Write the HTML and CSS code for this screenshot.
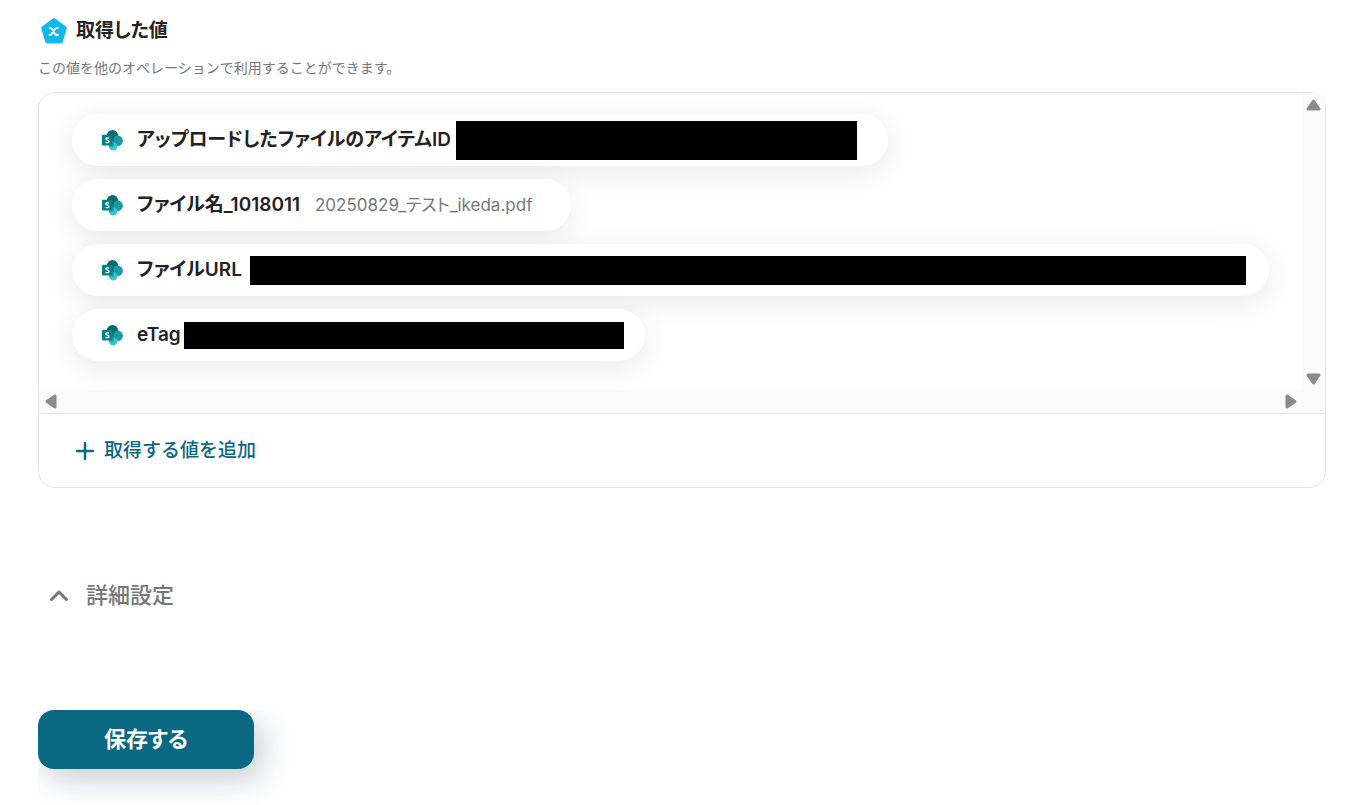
FILE: index.html
```
<!DOCTYPE html>
<html lang="ja">
<head>
    <meta charset="UTF-8">
    <meta name="viewport" content="width=device-width, initial-scale=1.0">
    <title>取得した値</title>
    <link rel="stylesheet" href="styles.css">
</head>
<body>
    <!-- Shared icons -->
    <svg class="sprite" aria-hidden="true">
        <symbol id="sharepoint" viewBox="0 0 22 22">
            <circle cx="11.500" cy="6.800" r="5.800" fill="#036c70"/>
            <circle cx="16.700" cy="11.800" r="5.200" fill="#1a9ba1"/>
            <circle cx="12.200" cy="17.400" r="4.200" fill="#37c6d0"/>
            <path d="M6 5.500h5.800a1 1 0 0 1 1 1v11.200H8z" fill="#000" opacity="0.200"/>
            <rect x="1" y="5.800" width="10.600" height="10.800" rx="1" fill="#038387"/>
            <path d="M8 9.200C7 8.700 4.800 8.600 4.800 9.900c0 1.500 3.200 1.100 3.200 2.600 0 1.400-2.400 1.300-3.400.8" fill="none" stroke="#fff" stroke-width="1.300"/>
        </symbol>
    </svg>
    <main class="page">
        <header class="section-header">
            <svg class="section-icon" viewBox="0 0 26 26" aria-hidden="true">
                <path d="M13 2.200 23.800 10 19.700 23.600H6.300L2.200 10z" fill="#11b9ea" stroke="#11b9ea" stroke-width="4" stroke-linejoin="round"/>
                <path d="M8.900 10.200c1.500-.3 2.300.3 3.200 2.200l1.200 2.600c.8 1.700 1.800 2.400 3.700 1.900M16.700 10c-1.300-.4-2.100.2-3.100 1.600l-2.500 3.800c-.8 1.200-1.500 1.800-2.600 1.500" fill="none" stroke="#fff" stroke-width="1.900" stroke-linecap="round"/>
            </svg>
            <h2 class="section-title">取得した値</h2>
        </header>
        <p class="section-note">この値を他のオペレーションで利用することができます。</p>

        <section class="card">
            <div class="scroll-area">
                <ul class="value-list">
                    <li class="chip chip-id">
                        <svg class="chip-icon" aria-hidden="true"><use href="#sharepoint"/></svg>
                        <span class="chip-label">アップロードしたファイルのアイテムID</span>
                        <span class="mask mask-id"></span>
                    </li>
                    <li class="chip chip-name">
                        <svg class="chip-icon" aria-hidden="true"><use href="#sharepoint"/></svg>
                        <span class="chip-label">ファイル名_1018011</span>
                        <span class="chip-value">20250829_テスト_ikeda.pdf</span>
                    </li>
                    <li class="chip chip-url">
                        <svg class="chip-icon" aria-hidden="true"><use href="#sharepoint"/></svg>
                        <span class="chip-label">ファイルURL</span>
                        <span class="mask mask-url"></span>
                    </li>
                    <li class="chip chip-etag">
                        <svg class="chip-icon" aria-hidden="true"><use href="#sharepoint"/></svg>
                        <span class="chip-label">eTag</span>
                        <span class="mask mask-etag"></span>
                    </li>
                </ul>
                <div class="bar bar-y" aria-hidden="true">
                    <svg width="15" height="12" viewBox="0 0 15 12"><path d="M7.500 2 13 10H2z"/></svg>
                    <svg width="15" height="12" viewBox="0 0 15 12"><path d="M7.500 10 13 2H2z"/></svg>
                </div>
                <div class="bar bar-x" aria-hidden="true">
                    <svg width="12" height="15" viewBox="0 0 12 15"><path d="M2 7.500 10 2v11z"/></svg>
                    <svg width="12" height="15" viewBox="0 0 12 15"><path d="M10 7.500 2 2v11z"/></svg>
                </div>
            </div>
            <div class="card-footer">
                <button type="button" class="add-btn">
                    <svg width="18" height="18" viewBox="0 0 18 18" aria-hidden="true"><path d="M9 1v16M1 9h16"/></svg>
                    取得する値を追加
                </button>
            </div>
        </section>

        <button type="button" class="details-btn">
            <svg width="20" height="14" viewBox="0 0 20 14" aria-hidden="true"><path d="M2.500 11.500 10 4l7.500 7.500"/></svg>
            詳細設定
        </button>

        <div class="actions">
            <button type="submit" class="save-btn">保存する</button>
        </div>
    </main>
</body>
</html>
```
FILE: styles.css
```
* {
    box-sizing: border-box;
}
body {
    margin: 0;
    background: #fff;
    color: #222;
    font-family: Inter, "Noto Sans CJK JP", sans-serif;
}
button {
    border: none;
    background: none;
    padding: 0;
    font-family: inherit;
    cursor: pointer;
}
.sprite {
    position: absolute;
    width: 0;
    height: 0;
}
.page {
    padding: 17px 43px 0 38px;
}
.section-header {
    display: flex;
    align-items: center;
    gap: 9px;
    padding-left: 3px;
}
.section-icon {
    width: 26px;
    height: 26px;
}
.section-title {
    margin: 0;
    font-size: 19px;
    font-weight: 600;
    line-height: 28px;
    font-feature-settings: "palt";
}
.section-note {
    margin: 12px 0 13px;
    color: #777;
    font-size: 14px;
    line-height: 22px;
}
.card {
    border: 1px solid #e4e4e4;
    border-radius: 17px;
}
.scroll-area {
    display: grid;
    grid-template-columns: 1fr 23px;
    grid-template-rows: auto 23px;
    border-bottom: 1px solid #e4e4e4;
}
.value-list {
    display: flex;
    flex-direction: column;
    align-items: flex-start;
    gap: 13px;
    min-width: 0;
    margin: 0;
    padding: 21px 33px 29px;
    overflow: hidden;
    list-style: none;
    border-top-left-radius: 16px;
}
.chip {
    display: flex;
    align-items: center;
    height: 52px;
    padding-left: 29px;
    border-radius: 26px;
    background: #fff;
    box-shadow: 0 6px 28px rgba(0, 0, 0, 0.09);
    font-feature-settings: "palt";
    white-space: nowrap;
}
.chip-icon {
    width: 22px;
    height: 22px;
    margin-right: 14px;
}
.chip-label {
    font-size: 19px;
    font-weight: 600;
    line-height: 28px;
}
.chip-value {
    margin-left: 15px;
    color: #777;
    font-size: 17px;
    line-height: 28px;
}
.chip-id {
    padding-right: 31px;
}
.chip-name {
    padding-right: 39px;
}
.chip-url {
    padding-right: 23px;
}
.chip-etag {
    padding-right: 21px;
}
.mask {
    background: #000;
}
.mask-id {
    width: 401px;
    height: 39px;
    margin-left: 5px;
}
.mask-url {
    width: 996px;
    height: 29px;
    margin-left: 8px;
}
.mask-etag {
    width: 440px;
    height: 27px;
    margin-left: 3px;
}
.bar {
    display: flex;
    align-items: center;
    justify-content: space-between;
    background: #fbfbfb;
}
.bar path {
    fill: #8b8b8b;
    stroke: #8b8b8b;
    stroke-width: 3;
    stroke-linejoin: round;
}
.bar-y {
    flex-direction: column;
    padding: 6px 0 5px;
}
.bar-x {
    grid-column: 1 / -1;
    padding: 0 28px 0 6px;
}
.card-footer {
    padding: 23px 37px 22px;
}
.add-btn {
    display: flex;
    align-items: center;
    gap: 10px;
    color: #0b6882;
    font-size: 19px;
    font-weight: 500;
    line-height: 28px;
}
.add-btn path {
    fill: none;
    stroke: currentColor;
    stroke-width: 2.5;
    stroke-linecap: round;
}
.details-btn {
    display: flex;
    align-items: center;
    gap: 17px;
    margin-top: 91px;
    padding-left: 11px;
    color: #777;
    font-size: 22px;
    font-weight: 500;
    line-height: 32px;
}
.details-btn path {
    fill: none;
    stroke: currentColor;
    stroke-width: 3;
    stroke-linecap: round;
    stroke-linejoin: round;
}
/* clips the button shadow on the top and left */
.actions {
    margin-top: 99px;
    padding-bottom: 36px;
    overflow: hidden;
}
.save-btn {
    display: block;
    width: 216px;
    height: 59px;
    padding-bottom: 2px;
    border-radius: 16px;
    background: #0b6882;
    box-shadow: 8px 10px 30px rgba(20, 50, 70, 0.24);
    color: #fff;
    font-size: 22px;
    font-weight: 700;
    line-height: 32px;
    font-feature-settings: "palt";
}
```
